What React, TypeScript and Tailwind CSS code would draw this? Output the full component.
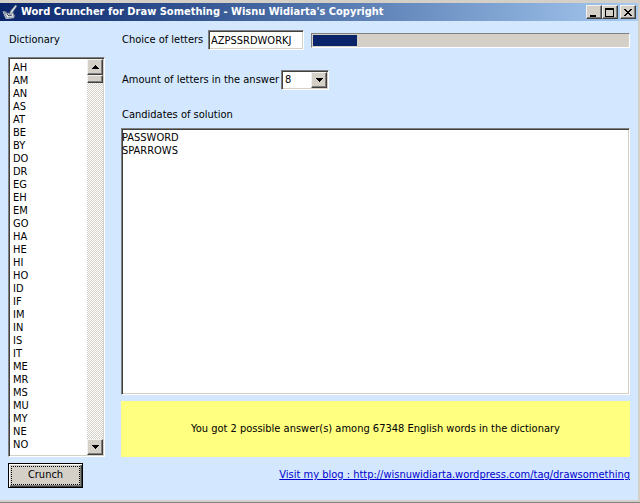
import React, { useState } from 'react';

const WORDS = [
  'AH', 'AM', 'AN', 'AS', 'AT', 'BE', 'BY', 'DO', 'DR', 'EG',
  'EH', 'EM', 'GO', 'HA', 'HE', 'HI', 'HO', 'ID', 'IF', 'IM',
  'IN', 'IS', 'IT', 'ME', 'MR', 'MS', 'MU', 'MY', 'NE', 'NO',
];

const SUNKEN =
  'border border-t-[#808080] border-l-[#808080] border-b-white border-r-white shadow-[inset_1px_1px_0_#404040,inset_-1px_-1px_0_#d4d0c8]';

const RAISED =
  'flex items-center justify-center bg-[#d4d0c8] border border-t-[#f4f2ee] border-l-[#f4f2ee] border-b-[#404040] border-r-[#404040] shadow-[inset_-1px_-1px_0_#808080]';

interface ArrowProps {
  up?: boolean;
}

const Arrow: React.FC<ArrowProps> = ({ up }) => (
  <svg width="7" height="4" viewBox="0 0 7 4" shapeRendering="crispEdges" aria-hidden="true">
    <path d={up ? 'M3 0h1v1h1v1h1v1h1v1H0V3h1V2h1V1h1z' : 'M0 0h7v1H6v1H5v1H4v1H3V3H2V2H1V1H0z'} />
  </svg>
);

const AppIcon: React.FC = () => (
  <svg width="16" height="16" viewBox="0 0 16 16" aria-hidden="true">
    <path d="M1 7l3 .5L5 9l6-1 2 4-1 2-8 1z" fill="#8794a3" />
    <path d="M3.5 9.5l2 1 5-1 1 3-6.5 1z" fill="#dfe5ea" />
    <path d="M1 7.5l3 7 8-1" fill="none" stroke="#b4bec8" strokeWidth="1" />
    <path d="M5 10l2 2 3-1" fill="none" stroke="#3b4756" strokeWidth="1" />
    <path d="M13.5 1L8.5 7l-1 4 3-2.5L15 2z" fill="#d5dce2" stroke="#54606e" strokeWidth=".5" />
  </svg>
);

const TitleBar: React.FC = () => (
  <header className="flex h-[18px] items-center bg-linear-to-r from-[#0a246a] to-[#a6caf0] px-0.5">
    <AppIcon />
    <h1 className="ml-[3px] flex-1 truncate leading-4 font-bold text-white">
      Word Cruncher for Draw Something - Wisnu Widiarta's Copyright
    </h1>
    <button aria-label="Minimize" className={`${RAISED} h-3.5 w-4`}>
      <svg width="10" height="9" viewBox="0 0 10 9" shapeRendering="crispEdges" aria-hidden="true">
        <path d="M1 7h6v2H1z" />
      </svg>
    </button>
    <button aria-label="Maximize" className={`${RAISED} h-3.5 w-4`}>
      <svg width="10" height="9" viewBox="0 0 10 9" shapeRendering="crispEdges" aria-hidden="true">
        <path d="M0 0h9v9H0zM1 2v6h7V2z" fillRule="evenodd" />
      </svg>
    </button>
    <button aria-label="Close" className={`${RAISED} ml-0.5 h-3.5 w-4`}>
      <svg width="8" height="7" viewBox="0 0 8 7" shapeRendering="crispEdges" aria-hidden="true">
        <path d="M0 0h2v1h1v1h2V1h1V0h2v1H7v1H6v1H5v1h1v1h1v1h1v1H6V6H5V5H3v1H2v1H0V6h1V5h1V4h1V3H2V2H1V1H0z" />
      </svg>
    </button>
  </header>
);

const Dictionary: React.FC = () => (
  <section className="flex w-[97px] flex-col">
    <label htmlFor="dictionary" className="mb-[7px] h-5 pl-px leading-5">
      Dictionary
    </label>
    <div className={`${SUNKEN} flex flex-1 bg-white p-px`}>
      <select
        id="dictionary"
        size={30}
        className="h-[395px] min-w-0 flex-1 appearance-none overflow-hidden bg-white py-0.5 pl-[3px] outline-none"
      >
        {WORDS.map((word) => (
          <option key={word} className="h-[13px] min-h-0 p-0 leading-[13px]">
            {word}
          </option>
        ))}
      </select>
      <div className="flex w-4 flex-col bg-[repeating-conic-gradient(#d4d0c8_0_25%,#ffffff_0_50%)] bg-size-[2px_2px]">
        <button aria-label="Scroll up" className={`${RAISED} h-4`}>
          <Arrow up />
        </button>
        <div className={`${RAISED} h-2`} />
        <button aria-label="Scroll down" className={`${RAISED} mt-auto h-4`}>
          <Arrow />
        </button>
      </div>
    </div>
  </section>
);

export default function App() {
  const [letters, setLetters] = useState('AZPSSRDWORKJ');
  const [amount, setAmount] = useState('8');
  const progress = 14;

  return (
    <div className="flex min-h-screen flex-col border-b border-[#808080] font-['DejaVu_Sans_Condensed','Noto_Sans',sans-serif] text-[11px] text-black">
      <div className="flex flex-1 flex-col border-t-3 border-r-2 border-b-2 border-[#d4d0c8] bg-[#d3e8ff]">
        <TitleBar />
        <main className="flex flex-1 flex-col px-2 pt-[9px] pb-3">
          <div className="flex flex-1 gap-4">
            <Dictionary />
            <section className="flex min-w-0 flex-1 flex-col">
              <div className="flex h-5 items-center">
                <label htmlFor="letters" className="w-[87px] whitespace-nowrap pl-px">
                  Choice of letters
                </label>
                <input
                  id="letters"
                  value={letters}
                  onChange={(e) => setLetters(e.target.value)}
                  className={`${SUNKEN} h-5 w-24 bg-white px-0.5 outline-none`}
                />
                <div
                  role="progressbar"
                  aria-label="Progress"
                  aria-valuenow={progress}
                  className="ml-[7px] h-[15px] flex-1 border border-t-[#808080] border-l-[#808080] border-b-white border-r-white bg-[#d4d0c8] p-px"
                >
                  <div className="h-full bg-[#0a246a]" style={{ width: `${progress}%` }} />
                </div>
              </div>

              <div className="mt-5 flex h-5 items-center">
                <label htmlFor="amount" className="w-40 whitespace-nowrap pl-px">
                  Amount of letters in the answer
                </label>
                <div className={`${SUNKEN} relative h-5 w-12 bg-white p-px`}>
                  <select
                    id="amount"
                    value={amount}
                    onChange={(e) => setAmount(e.target.value)}
                    className="h-full w-full appearance-none pl-0.5 outline-none"
                  >
                    {['3', '4', '5', '6', '7', '8'].map((n) => (
                      <option key={n}>{n}</option>
                    ))}
                  </select>
                  <span className={`${RAISED} pointer-events-none absolute inset-y-px right-px w-4`}>
                    <Arrow />
                  </span>
                </div>
              </div>

              <label htmlFor="candidates" className="mt-[15px] mb-[3px] h-5 pl-px leading-5">
                Candidates of solution
              </label>
              <textarea
                id="candidates"
                readOnly
                value={'PASSWORD\nSPARROWS'}
                className={`${SUNKEN} flex-1 resize-none bg-white py-0.5 leading-[13px] outline-none`}
              />

              <p className="mt-1.5 flex h-14 items-center justify-center bg-[#ffff80]">
                You got 2 possible answer(s) among 67348 English words in the dictionary
              </p>
            </section>
          </div>

          <footer className="mt-1.5 flex items-center justify-between">
            <button className="h-[25px] w-[75px] border border-black bg-[#d4d0c8] p-0.5 shadow-[inset_1px_1px_0_#ffffff,inset_-1px_-1px_0_#404040,inset_-2px_-2px_0_#808080]">
              <span className="flex h-full items-center justify-center border border-dotted border-black">
                Crunch
              </span>
            </button>
            <a href="http://wisnuwidiarta.wordpress.com/tag/drawsomething" className="text-[#0000d0] underline">
              Visit my blog : http://wisnuwidiarta.wordpress.com/tag/drawsomething
            </a>
          </footer>
        </main>
      </div>
    </div>
  );
}
